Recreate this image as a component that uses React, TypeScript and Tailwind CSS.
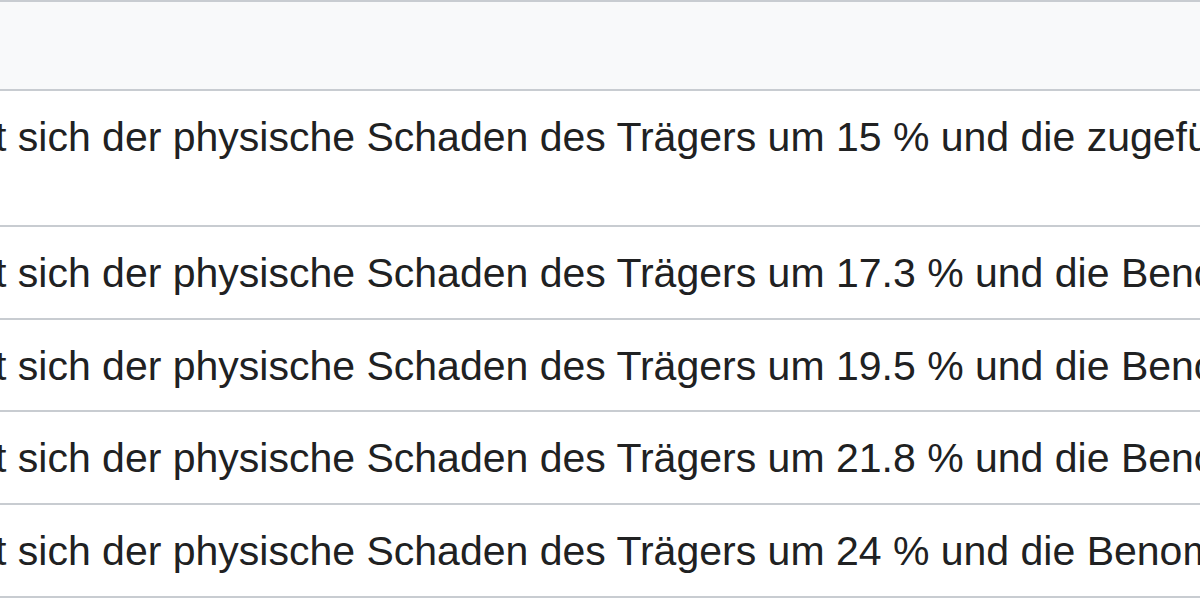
import React from 'react';

const rows = [
  { value: '15', tail: 'zugefügte Benommenheit', h: 'h-[136px]' },
  { value: '17.3', tail: 'Benommenheit', h: 'h-[93px]' },
  { value: '19.5', tail: 'Benommenheit', h: 'h-[92px]' },
  { value: '21.8', tail: 'Benommenheit', h: 'h-[93px]' },
  { value: '24', tail: 'Benommenheit', h: 'h-[93px]' },
];

export default function App() {
  return (
    <div
      className="w-[1200px] h-[600px] overflow-hidden bg-white text-[#202122] text-[41px]"
      style={{ fontFamily: '"Liberation Sans", Arial, sans-serif' }}
    >
      {/* Kopfzeile */}
      <div className="h-[91px] bg-[#f8f9fa] border-t-2 border-b-2 border-[#c8ccd1]" />

      {/* Tabellenzeilen */}
      {rows.map((row) => (
        <div
          key={row.value}
          className={`${row.h} border-b-2 border-[#c8ccd1] flex items-start pt-[23px] whitespace-nowrap`}
        >
          <span className="-ml-[5px] leading-[47px]">
            t sich der physische Schaden des Trägers um {row.value} % und die {row.tail}
          </span>
        </div>
      ))}
    </div>
  );
}
